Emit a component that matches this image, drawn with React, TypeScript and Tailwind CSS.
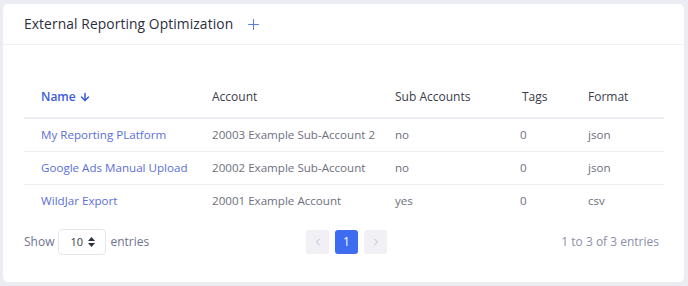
import { ArrowDown, ChevronLeft, ChevronRight, Plus } from "lucide-react";

const rows = [
  { name: "My Reporting PLatform", account: "20003 Example Sub-Account 2", sub: "no", tags: "0", format: "json" },
  { name: "Google Ads Manual Upload", account: "20002 Example Sub-Account", sub: "no", tags: "0", format: "json" },
  { name: "WildJar Export", account: "20001 Example Account", sub: "yes", tags: "0", format: "csv" },
];

const App = () => {
  return (
    <div className="h-[286px] w-[688px] bg-[#ecedf3] pl-[3px] pr-[4px] pt-[4px] pb-[4px] font-['Open_Sans',sans-serif]">
      <div className="flex h-full flex-col rounded-[5px] bg-white">
        {/* header */}
        <div className="flex h-[41px] items-center border-b border-[#eef0f4] pl-[21px]">
          <h2 className="text-[13.8px] tracking-[0.1px] text-[#2c2e3e]">External Reporting Optimization</h2>
          <Plus className="ml-[12px] h-[17px] w-[17px] text-[#5d7ce0]" strokeWidth={1.5} />
        </div>

        <div className="px-[21px] pt-[43px]">
          <table className="w-[640px] table-fixed border-collapse text-[11.6px]">
            <thead>
              <tr className="border-b-2 border-[#eceef3] text-left text-[12px] text-[#3a3c4c]">
                <th className="h-[30px] w-[188px] pl-[17px] align-top font-semibold text-[#3b5bdb]">
                  <span className="inline-flex items-center gap-[3px]">
                    Name <ArrowDown className="h-[12px] w-[12px]" strokeWidth={3} />
                  </span>
                </th>
                <th className="w-[183px] align-top font-medium">Account</th>
                <th className="w-[125px] align-top font-medium">Sub Accounts</th>
                <th className="w-[68px] pl-[2px] align-top font-medium">Tags</th>
                <th className="align-top font-medium">Format</th>
              </tr>
            </thead>
            <tbody>
              {rows.map((r, i) => (
                <tr key={r.name} className={i < rows.length - 1 ? "border-b border-[#eceef3]" : ""}>
                  <td className="h-[33px] pl-[17px] text-[#5b6fd8]">{r.name}</td>
                  <td className="text-[#6e707e]">{r.account}</td>
                  <td className="text-[#6e707e]">{r.sub}</td>
                  <td className="text-[#6e707e]">{r.tags}</td>
                  <td className="text-[#6e707e]">{r.format}</td>
                </tr>
              ))}
            </tbody>
          </table>
        </div>

        {/* footer */}
        <div className="mt-[12px] flex items-center px-[21px] text-[12px] text-[#6f7390]">
          <div className="flex w-[282px] items-center">
            <span>Show</span>
            <div className="ml-[4px] flex h-[26px] w-[48px] items-center justify-between rounded-[4px] border border-[#e4e6ec] pl-[11px] pr-[10px] text-[11px] text-[#3a3c4c]">
              <span>10</span>
              <svg width="7" height="10" viewBox="0 0 7 10" fill="#2c2e3e">
                <path d="M3.5 0 L7 4 H0 Z" />
                <path d="M3.5 10 L7 6 H0 Z" />
              </svg>
            </div>
            <span className="ml-[4px]">entries</span>
          </div>
          <div className="flex items-center gap-[6px]">
            <button className="flex h-[24px] w-[23px] items-center justify-center rounded-[3px] bg-[#f0f0f5] text-[#a9acbd]">
              <ChevronLeft className="h-[12px] w-[12px]" strokeWidth={1.5} />
            </button>
            <button className="flex h-[24px] w-[23px] items-center justify-center rounded-[3px] bg-[#3d6cf0] text-[12px] text-white">
              1
            </button>
            <button className="flex h-[24px] w-[23px] items-center justify-center rounded-[3px] bg-[#f0f0f5] text-[#a9acbd]">
              <ChevronRight className="h-[12px] w-[12px]" strokeWidth={1.5} />
            </button>
          </div>
          <span className="ml-auto pr-[4px] text-[#8b8fa8]">1 to 3 of 3 entries</span>
        </div>
      </div>
    </div>
  );
};

export default App;
